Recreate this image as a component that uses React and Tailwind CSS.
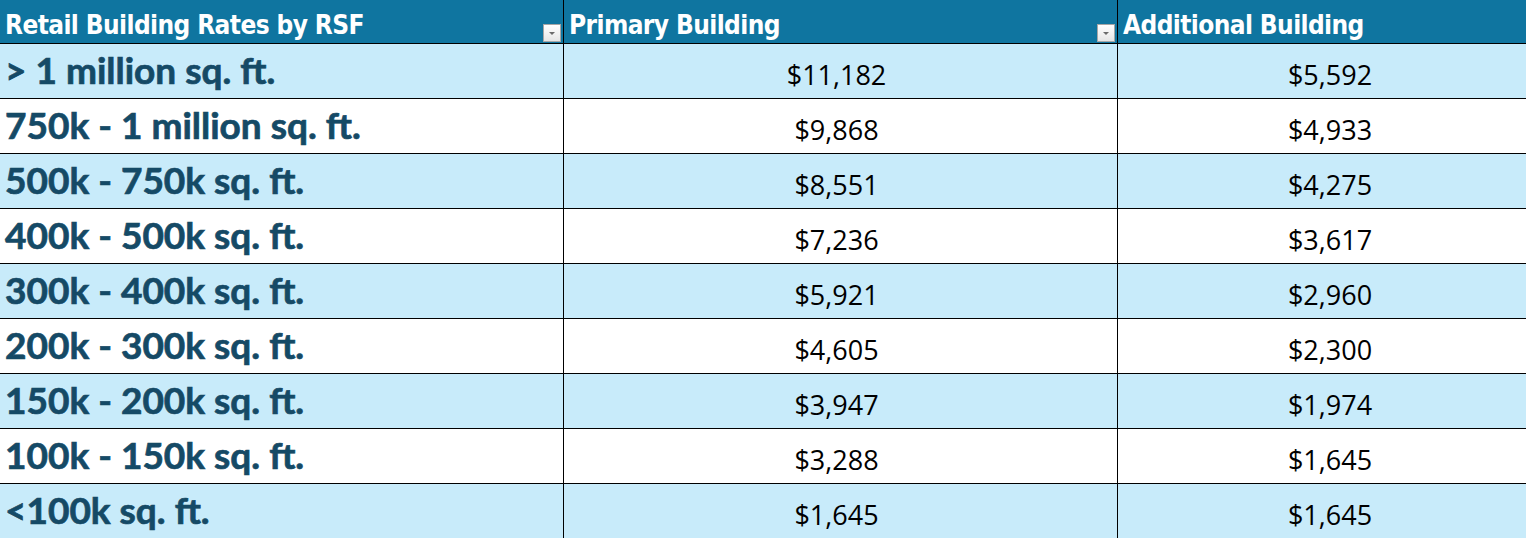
import React from "react";

const rows = [
  ["> 1 million sq. ft.", "$11,182", "$5,592"],
  ["750k - 1 million sq. ft.", "$9,868", "$4,933"],
  ["500k - 750k sq. ft.", "$8,551", "$4,275"],
  ["400k - 500k sq. ft.", "$7,236", "$3,617"],
  ["300k - 400k sq. ft.", "$5,921", "$2,960"],
  ["200k - 300k sq. ft.", "$4,605", "$2,300"],
  ["150k - 200k sq. ft.", "$3,947", "$1,974"],
  ["100k - 150k sq. ft.", "$3,288", "$1,645"],
  ["<100k sq. ft.", "$1,645", "$1,645"],
];

function FilterBtn() {
  return (
    <div className="absolute right-[2px] bottom-[1px] w-[18px] h-[18px] border border-[#a6a6a6] bg-gradient-to-b from-[#ffffff] to-[#e6e6e6] flex items-center justify-center">
      <svg width="8" height="5" viewBox="0 0 8 5">
        <path d="M1 1 L7 1 L4 4 Z" fill="#6b6b6b" />
      </svg>
    </div>
  );
}

const headFont = { fontFamily: '"Liberation Sans Narrow", "DejaVu Sans Condensed", sans-serif' };

export default function App() {
  const head = "relative h-[44px] flex items-end pl-[5px] pb-[5px] bg-[#0f75a0] text-white font-bold text-[26px] tracking-[-0.6px] leading-none border-b border-black";
  return (
    <div className="w-[1526px] h-[538px] overflow-hidden bg-white">
      <div className="grid grid-cols-[564px_554px_408px]">
        <div className={head + " border-r"} style={headFont}>
          <span>Retail Building Rates by RSF</span>
          <FilterBtn />
        </div>
        <div className={head + " border-r"} style={headFont}>
          <span>Primary Building</span>
          <FilterBtn />
        </div>
        <div className={head} style={headFont}>
          <span>Additional Building</span>
        </div>
        {rows.map((r, i) => {
          const bg = i % 2 === 0 ? "bg-[#c8ebfa]" : "bg-white";
          return (
            <React.Fragment key={i}>
              <div className={`${bg} h-[55px] border-b border-r border-black flex items-end pl-[5px] pb-[10px] font-['Lato',sans-serif] font-bold text-[37px] leading-none text-[#154a66] [-webkit-text-stroke:0.7px_#154a66]`}>
                {r[0]}
              </div>
              <div className={`${bg} h-[55px] border-b border-r border-black flex items-end justify-center pb-[10px] pr-[8px] font-['Open_Sans',sans-serif] text-[27px] leading-none text-black`}>
                {r[1]}
              </div>
              <div className={`${bg} h-[55px] border-b border-black flex items-end justify-center pb-[10px] pl-[16px] font-['Open_Sans',sans-serif] text-[27px] leading-none text-black`}>
                {r[2]}
              </div>
            </React.Fragment>
          );
        })}
      </div>
    </div>
  );
}
